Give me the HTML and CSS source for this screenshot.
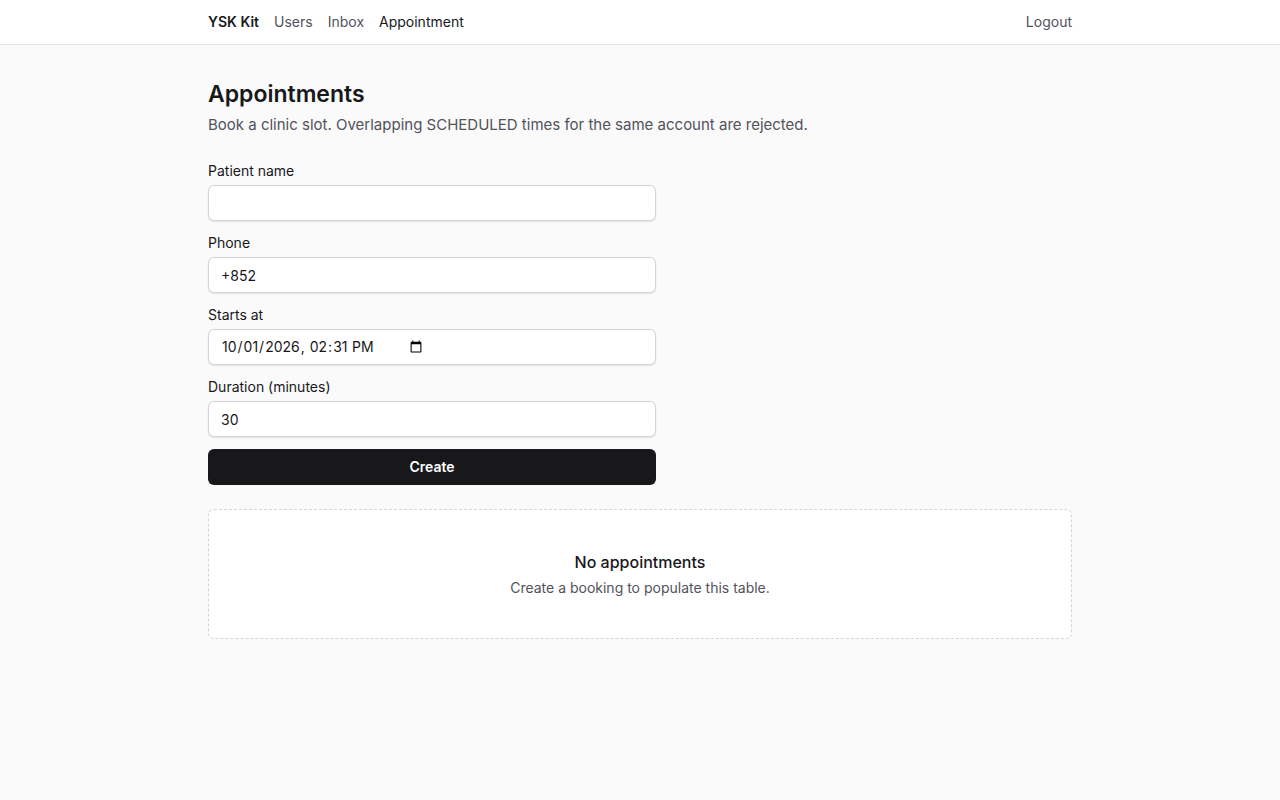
FILE: index.html
```html
<!DOCTYPE html>
<html lang="en">
<head>
  <meta charset="UTF-8">
  <meta name="viewport" content="width=device-width, initial-scale=1">
  <title>Appointments</title>
  <link rel="stylesheet" href="styles.css">
</head>
<body>
  <header class="topbar">
    <div class="container topbar-inner">
      <nav class="nav">
        <a href="#" class="brand">YSK Kit</a>
        <a href="#">Users</a>
        <a href="#">Inbox</a>
        <a href="#" class="active">Appointment</a>
      </nav>
      <button type="button" class="logout">Logout</button>
    </div>
  </header>

  <main class="container content">
    <div class="page-head">
      <h1>Appointments</h1>
      <p>Book a clinic slot. Overlapping SCHEDULED times for the same account are rejected.</p>
    </div>

    <form class="form">
      <div class="field">
        <label for="patient">Patient name</label>
        <input type="text" id="patient">
      </div>
      <div class="field">
        <label for="phone">Phone</label>
        <input type="tel" id="phone" value="+852">
      </div>
      <div class="field">
        <label for="starts">Starts at</label>
        <input type="datetime-local" id="starts" value="2026-10-01T14:31">
      </div>
      <div class="field">
        <label for="duration">Duration (minutes)</label>
        <input type="number" id="duration" value="30">
      </div>
      <button type="submit" class="create">Create</button>
    </form>

    <section class="empty">
      <h2>No appointments</h2>
      <p>Create a booking to populate this table.</p>
    </section>
  </main>
</body>
</html>
```
FILE: styles.css
```css
* {
  box-sizing: border-box;
}
body {
  margin: 0;
  font-family: Inter, sans-serif;
  font-size: 16px;
  line-height: 24px;
  color: #18181b;
  background-color: #fafafa;
}
h1, h2, p {
  margin: 0;
}
.container {
  max-width: 896px;
  margin: 0 auto;
  padding: 0 16px;
}

/* Top bar */
.topbar {
  background: #fff;
  border-bottom: 1px solid #e4e4e7;
}
.topbar-inner {
  display: flex;
  align-items: center;
  justify-content: space-between;
  padding-top: 12px;
  padding-bottom: 12px;
  font-size: 14px;
  line-height: 20px;
}
.nav {
  display: flex;
  gap: 15px;
}
.nav a {
  color: #52525b;
  text-decoration: none;
}
.nav .brand {
  color: #18181b;
  font-weight: 600;
}
.nav .active {
  color: #18181b;
}
.logout {
  padding: 0;
  border: none;
  background: none;
  font: inherit;
  color: #52525b;
  cursor: pointer;
}

.content {
  display: flex;
  flex-direction: column;
  gap: 24px;
  padding-top: 32px;
  padding-bottom: 32px;
}
.page-head h1 {
  font-size: 23px;
  line-height: 34px;
  font-weight: 600;
}
.page-head p {
  margin-top: 2px;
  font-size: 15px;
  color: #52525b;
}

/* Booking form */
.form {
  display: grid;
  gap: 12px;
  max-width: 448px;
}
.field {
  display: grid;
  gap: 4px;
  font-size: 14px;
  line-height: 20px;
}
.field input {
  width: 100%;
  height: 36px;
  padding: 4px 12px;
  border: 1px solid #d4d4d8;
  border-radius: 6px;
  background: #fff;
  box-shadow: 0 1px 2px rgba(0,0,0,0.1);
  font: inherit;
  color: #18181b;
}
/* keep the calendar button next to the date */
.field input::-webkit-datetime-edit {
  flex: none;
}
.create {
  height: 36px;
  border: none;
  border-radius: 6px;
  background: #18181b;
  color: #fff;
  font: inherit;
  font-size: 14px;
  font-weight: 600;
  cursor: pointer;
}

.empty {
  padding: 40px 24px;
  border: 1px dashed #d4d4d8;
  border-radius: 6px;
  background: #fff;
  text-align: center;
}
.empty h2 {
  font-size: 16px;
  line-height: 24px;
  font-weight: 500;
}
.empty p {
  margin-top: 4px;
  font-size: 14px;
  line-height: 20px;
  color: #52525b;
}
```
